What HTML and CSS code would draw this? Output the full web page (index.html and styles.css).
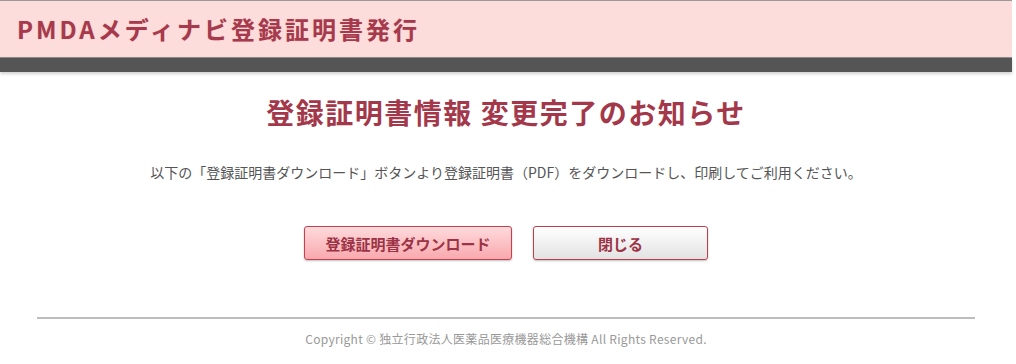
FILE: index.html
```html
<!DOCTYPE html>
<html lang="ja">
<head>
<meta charset="utf-8">
<title>PMDAメディナビ登録証明書発行</title>
<link rel="stylesheet" href="styles.css">
</head>
<body>
<div class="page">
  <header class="header">
    <h1 class="site-title">PMDAメディナビ登録証明書発行</h1>
  </header>
  <div class="bar"></div>
  <main class="content">
    <h2 class="heading">登録証明書情報 変更完了のお知らせ</h2>
    <p class="lead">以下の「登録証明書ダウンロード」ボタンより登録証明書（PDF）をダウンロードし、印刷してご利用ください。</p>
    <div class="buttons">
      <button class="btn btn-primary" type="button">登録証明書ダウンロード</button>
      <button class="btn btn-secondary" type="button">閉じる</button>
    </div>
  </main>
  <footer class="footer">
    <hr class="rule">
    <p class="copyright">Copyright © 独立行政法人医薬品医療機器総合機構 All Rights Reserved.</p>
  </footer>
</div>
</body>
</html>
```
FILE: styles.css
```css
html, body {
  margin: 0;
  padding: 0;
  background: #ffffff;
}
body {
  font-family: "Noto Sans CJK JP", "Noto Sans", sans-serif;
  color: #555555;
}
.page {
  width: 1012px;
}
.header {
  box-sizing: border-box;
  height: 57px;
  border-top: 1px solid #9a9a9a;
  background: #fddddc;
  display: flex;
  align-items: center;
  padding-left: 17px;
}
.site-title {
  margin: 0;
  font-size: 24px;
  font-weight: bold;
  letter-spacing: 3px;
  color: #a63a4c;
  line-height: 1;
  text-shadow: 0 0 1px rgba(166, 58, 76, 0.25);
}
.bar {
  height: 14px;
  border-top: 1px solid #8a8a8a;
  background: #555555;
  box-shadow: 0 2px 3px rgba(0, 0, 0, 0.18);
}
.content {
  display: flex;
  flex-direction: column;
  align-items: center;
  padding-top: 20px;
}
.heading {
  margin: 0;
  font-size: 28px;
  line-height: 40px;
  font-weight: bold;
  letter-spacing: 1.5px;
  color: #a4384b;
}
.lead {
  margin: 30px 0 0;
  font-size: 14px;
  line-height: 20px;
  color: #555555;
}
.buttons {
  display: flex;
  gap: 21px;
  margin-top: 44px;
}
.btn {
  box-sizing: border-box;
  height: 34px;
  border: 1px solid #c2404f;
  border-radius: 3px;
  font-family: "Noto Sans CJK JP", "Noto Sans", sans-serif;
  font-size: 15px;
  font-weight: bold;
  color: #9c3346;
  box-shadow: 0 1px 2px rgba(0, 0, 0, 0.25);
  padding: 0;
  cursor: pointer;
}
.btn-primary {
  width: 208px;
  background: linear-gradient(#ffdadc, #f8a9ae);
}
.btn-secondary {
  width: 175px;
  background: linear-gradient(#ffffff, #e2e2e2);
  border-color: #b8404d;
}
.footer {
  margin-top: 57px;
  display: flex;
  flex-direction: column;
  align-items: center;
}
.rule {
  width: 938px;
  margin: 0;
  border: 0;
  height: 2px;
  background: #bdbdbd;
}
.copyright {
  margin: 11px 0 0;
  font-size: 12px;
  line-height: 18px;
  letter-spacing: 0.3px;
  color: #999999;
}
```
